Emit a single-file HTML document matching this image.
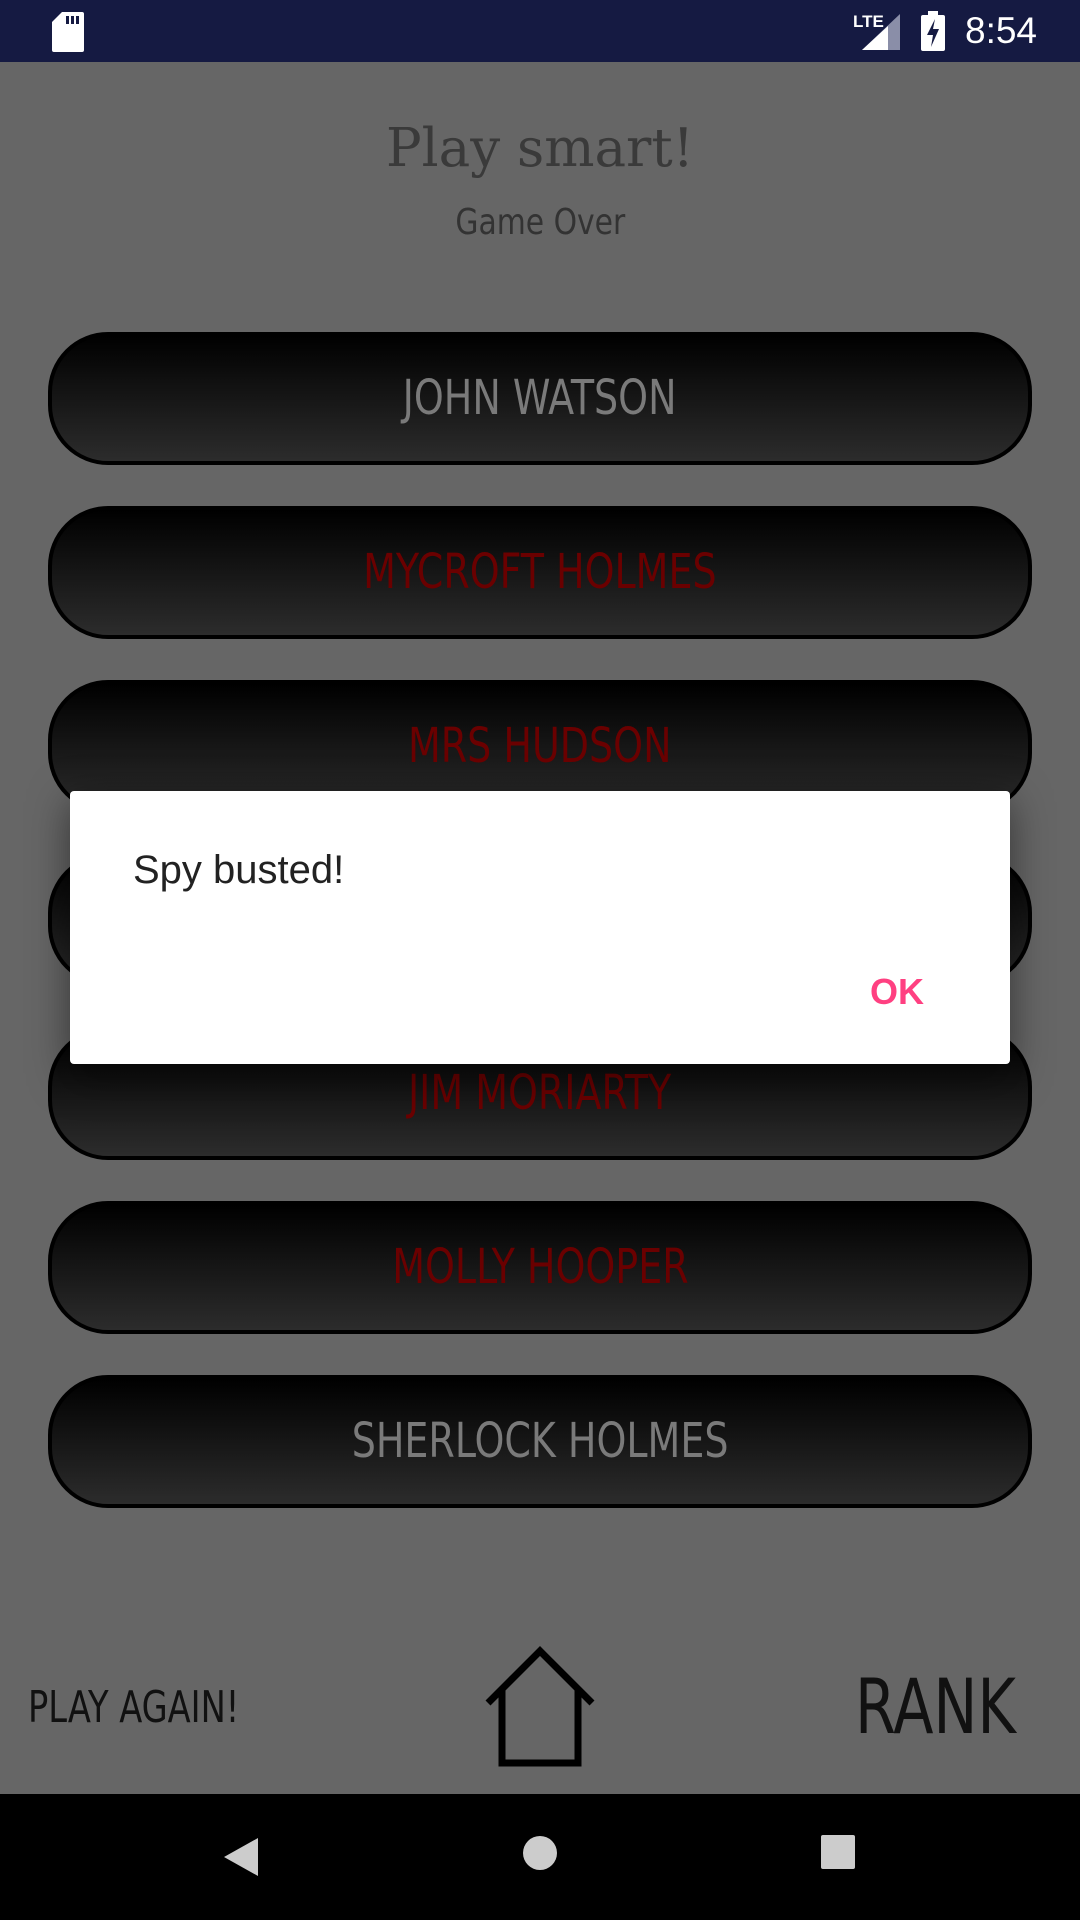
<!DOCTYPE html>
<html><head><meta charset="utf-8"><style>
*{margin:0;padding:0;box-sizing:border-box}
body{width:1080px;height:1920px;background:#666;position:relative;overflow:hidden;font-family:"Liberation Sans",sans-serif}
.sb{position:absolute;left:0;top:0;width:1080px;height:62px;background:#151a42}
.t{position:absolute;left:0;width:1080px;text-align:center}
.btn{position:absolute;left:48px;width:984px;height:133px;border:4px solid #000;border-radius:60px;background:linear-gradient(#000,#2c2c2c);text-align:center;line-height:125px;font-size:48px;font-family:"DejaVu Sans Condensed","Liberation Sans Narrow",sans-serif;font-weight:200}
.btn span{display:inline-block;transform:scaleX(0.88)}
.g{color:#7a7a7a}.r{color:#6a0000}
.dlg{position:absolute;left:70px;top:791px;width:940px;height:273px;background:#fff;border-radius:4px;box-shadow:0 10px 40px rgba(0,0,0,.5)}
.nav{position:absolute;left:0;top:1794px;width:1080px;height:126px;background:#000}
</style></head><body>
<div class="sb">
<svg style="position:absolute;left:52px;top:12px" width="32" height="40" viewBox="0 0 32 40"><path d="M10 0H30a2 2 0 0 1 2 2V38a2 2 0 0 1-2 2H2a2 2 0 0 1-2-2V10Z" fill="#fff"/><rect x="14" y="4" width="3" height="8" fill="#151a42"/><rect x="19" y="4" width="3" height="8" fill="#151a42"/><rect x="24" y="4" width="3" height="8" fill="#151a42"/></svg>
<div style="position:absolute;left:853px;top:12px;color:#fff;font-size:17px;font-weight:bold;font-family:'Liberation Sans Narrow',sans-serif">LTE</div>
<svg style="position:absolute;left:862px;top:14px" width="38" height="36"><polygon points="38,0 38,36 0,36" fill="#8a8ea8"/><polygon points="26,12 26,36 0,36" fill="#fff"/></svg>
<svg style="position:absolute;left:921px;top:11px" width="24" height="40"><rect x="7" y="0" width="10" height="4" fill="#fff"/><rect x="0" y="4" width="24" height="36" rx="2" fill="#fff"/><polygon points="14,8 6,24 12,24 10,36 18,18 12,18" fill="#151a42"/></svg>
<div style="position:absolute;left:965px;top:10px;color:#fff;font-size:37px">8:54</div>
</div>
<div class="t" style="top:118px;font-size:53px;font-family:'DejaVu Serif','Liberation Serif',serif;color:#3a3a3a">Play smart!</div>
<div class="t" style="top:202px;font-size:36px;color:#333;font-family:'DejaVu Sans Condensed',sans-serif;font-weight:200"><span style="display:inline-block;transform:scaleX(0.92)">Game Over</span></div>
<div class="btn g" style="top:332px"><span>JOHN WATSON</span></div>
<div class="btn r" style="top:506px"><span>MYCROFT HOLMES</span></div>
<div class="btn r" style="top:680px"><span>MRS HUDSON</span></div>
<div class="btn r" style="top:853px"><span>X</span></div>
<div class="btn r" style="top:1027px"><span>JIM MORIARTY</span></div>
<div class="btn r" style="top:1201px"><span>MOLLY HOOPER</span></div>
<div class="btn g" style="top:1375px"><span>SHERLOCK HOLMES</span></div>
<div class="dlg">
<div style="position:absolute;left:63px;top:57px;font-size:40px;color:#222">Spy busted!</div>
<div style="position:absolute;left:800px;top:180px;font-size:36px;font-weight:bold;color:#ff4081">OK</div>
</div>
<div style="position:absolute;left:28px;top:1682px;font-size:44px;color:#111;font-family:'DejaVu Sans Condensed',sans-serif;font-weight:200;transform:scaleX(0.85);transform-origin:left">PLAY AGAIN!</div>
<svg style="position:absolute;left:482px;top:1645px" width="116" height="122" viewBox="0 0 116 122"><path d="M6 58L58 6L110 58M20 44V118H96V44" fill="none" stroke="#000" stroke-width="7"/></svg>
<div style="position:absolute;left:855px;top:1662px;font-size:76px;color:#111;font-family:'DejaVu Sans Condensed',sans-serif;font-weight:200;transform:scaleX(0.86);transform-origin:left">RANK</div>
<div class="nav">
<svg style="position:absolute;left:222px;top:42px" width="40" height="42"><polygon points="36,2 36,40 2,21" fill="#ccc"/></svg>
<svg style="position:absolute;left:521px;top:40px" width="38" height="38"><circle cx="19" cy="19" r="17" fill="#ccc"/></svg>
<svg style="position:absolute;left:821px;top:41px" width="34" height="34"><rect width="34" height="34" rx="2" fill="#ccc"/></svg>
</div>
</body></html>
